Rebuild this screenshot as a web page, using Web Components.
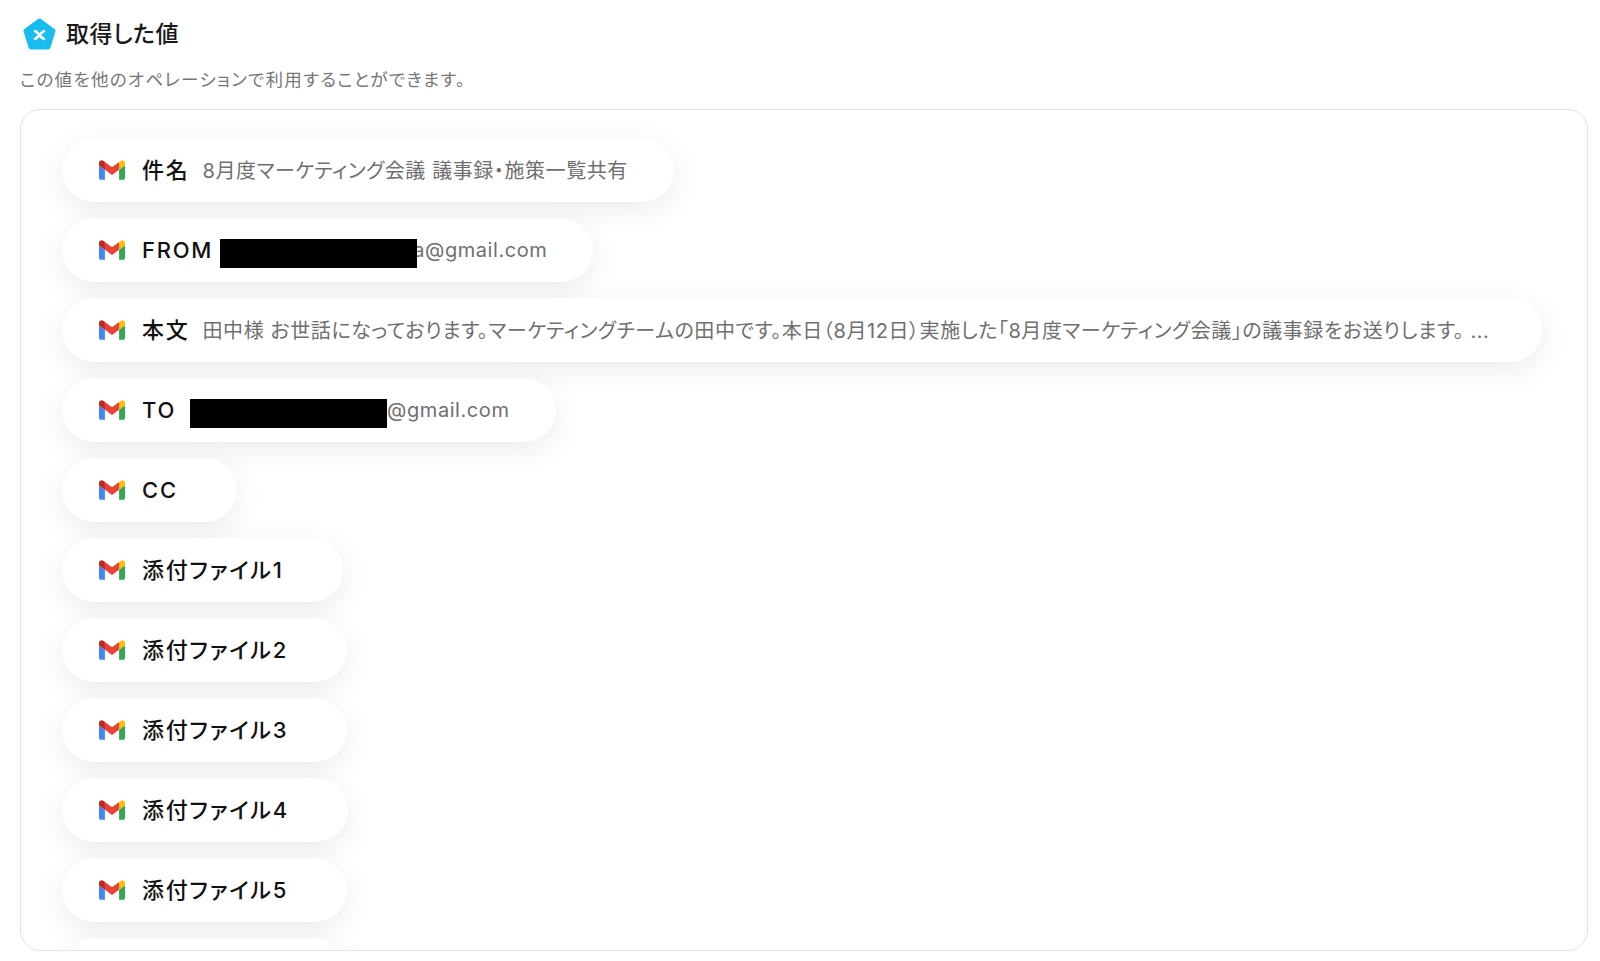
<!DOCTYPE html>
<html lang="ja">
<head>
<meta charset="utf-8">
<title>取得した値</title>
<style>
    html, body { margin: 0; background: #fff; }
    body {
        font-family: "Inter", "Noto Sans CJK JP", sans-serif;
        font-feature-settings: "palt";
        height: 961px;
        overflow: hidden;
    }
</style>
</head>
<body>
<output-panel heading="取得した値" note="この値を他のオペレーションで利用することができます。">
    <value-pill cjk label="件名">8月度マーケティング会議 議事録・施策一覧共有</value-pill>
    <value-pill label="FROM"><redact-box style="margin-left:-6px;margin-right:-4px"></redact-box>a@gmail.com</value-pill>
    <value-pill cjk label="本文">田中様 お世話になっております。マーケティングチームの田中です。本日（8月12日）実施した「8月度マーケティング会議」の議事録をお送りします。 ...&nbsp;</value-pill>
    <value-pill label="TO"><redact-box style="margin-left:1px"></redact-box>@gmail.com</value-pill>
    <value-pill label="CC"></value-pill>
    <value-pill cjk label="添付ファイル1"></value-pill>
    <value-pill cjk label="添付ファイル2"></value-pill>
    <value-pill cjk label="添付ファイル3"></value-pill>
    <value-pill cjk label="添付ファイル4"></value-pill>
    <value-pill cjk label="添付ファイル5"></value-pill>
    <value-pill cjk label="添付ファイル6"></value-pill>
</output-panel>

<script>
class RedactBox extends HTMLElement {
    constructor() {
        super();
        this.attachShadow({ mode: 'open' });
    }

    connectedCallback() {
        this.shadowRoot.innerHTML = `
            <style>
                :host {
                    display: inline-block;
                    position: relative;
                    z-index: 1;
                    width: 197px;
                    height: 29px;
                    margin-top: 6px;
                    background: #000;
                }
            </style>
        `;
    }
}

class ValuePill extends HTMLElement {
    constructor() {
        super();
        this.attachShadow({ mode: 'open' });
    }

    connectedCallback() {
        this.shadowRoot.innerHTML = `
            <style>
                :host {
                    display: flex;
                    flex: none;
                    align-items: center;
                    width: fit-content;
                    height: 64px;
                    box-sizing: border-box;
                    padding: 0 46px 0 37px;
                    border-radius: 32px;
                    background: #fff;
                    box-shadow: 0 8px 30px rgba(0, 0, 0, .08);
                    white-space: nowrap;
                }
                svg {
                    flex: none;
                    width: 26px;
                    height: 20px;
                    margin-right: 17px;
                }
                .label {
                    font-size: 22px;
                    font-weight: 500;
                    letter-spacing: 1.76px;
                    color: #111;
                    margin-right: 13px;
                }
                .value {
                    display: flex;
                    align-items: center;
                    font-size: 20px;
                    letter-spacing: .57px;
                    color: #6f6f6f;
                }
                /* CJK glyphs sit low in the fallback font, lift them a bit */
                :host([cjk]) .label {
                    padding-bottom: 4px;
                }
                :host([cjk]) .value {
                    padding-bottom: 2px;
                }
            </style>
            <svg viewBox="52 42 88 66" aria-hidden="true">
                <path fill="#4285f4" d="M58 108h14V74L52 59v43c0 3.32 2.69 6 6 6"/>
                <path fill="#34a853" d="M120 108h14c3.32 0 6-2.69 6-6V59l-20 15"/>
                <path fill="#fbbc04" d="M120 48v26l20-15v-8c0-7.42-8.47-11.65-14.4-7.2"/>
                <path fill="#ea4335" d="M72 74V48l24 18 24-18v26L96 92"/>
                <path fill="#c5221f" d="M52 51v8l20 15V48l-5.6-4.2c-5.94-4.45-14.4-.22-14.4 7.2"/>
            </svg>
            <span class="label">${this.getAttribute('label')}</span>
            <span class="value"><slot></slot></span>
        `;
    }
}

class OutputPanel extends HTMLElement {
    constructor() {
        super();
        this.attachShadow({ mode: 'open' });
    }

    connectedCallback() {
        this.shadowRoot.innerHTML = `
            <style>
                :host {
                    display: flex;
                    flex-direction: column;
                    height: 961px;
                    box-sizing: border-box;
                    padding: 18px 12px 10px 20px;
                }
                .head {
                    display: flex;
                    align-items: center;
                    height: 32px;
                    padding-left: 3px;
                    gap: 10px;
                }
                .head svg {
                    width: 33px;
                    height: 33px;
                    flex: none;
                }
                h2 {
                    margin: 0;
                    padding-bottom: 4px;
                    font-size: 23px;
                    font-weight: 500;
                    letter-spacing: .5px;
                    color: #1a1a1a;
                }
                p {
                    margin: 18px 0 0;
                    font-size: 17.6px;
                    line-height: 24px;
                    letter-spacing: 1.22px;
                    color: #777;
                }
                .list {
                    flex: 1;
                    min-height: 0;
                    display: flex;
                    flex-direction: column;
                    gap: 16px;
                    margin-top: 17px;
                    padding: 28px 0 0 41px;
                    border: 1.5px solid #e2e2e2;
                    border-radius: 20px;
                    overflow: hidden;
                }
            </style>
            <div class="head">
                <svg viewBox="0 0 33 33" aria-hidden="true">
                    <path d="M16.5 3 L30 13 L25 29 L8 29 L3 13 Z" fill="#18bcee" stroke="#18bcee" stroke-width="5" stroke-linejoin="round"/>
                    <path d="M12 13 C14.5 14 18.5 20 21 21 M21 13 C18.5 14 14.5 20 12 21" fill="none" stroke="#fff" stroke-width="2.6" stroke-linecap="round"/>
                </svg>
                <h2>${this.getAttribute('heading')}</h2>
            </div>
            <p>${this.getAttribute('note')}</p>
            <div class="list"><slot></slot></div>
        `;
    }
}

customElements.define('redact-box', RedactBox);
customElements.define('value-pill', ValuePill);
customElements.define('output-panel', OutputPanel);
</script>
</body>
</html>
